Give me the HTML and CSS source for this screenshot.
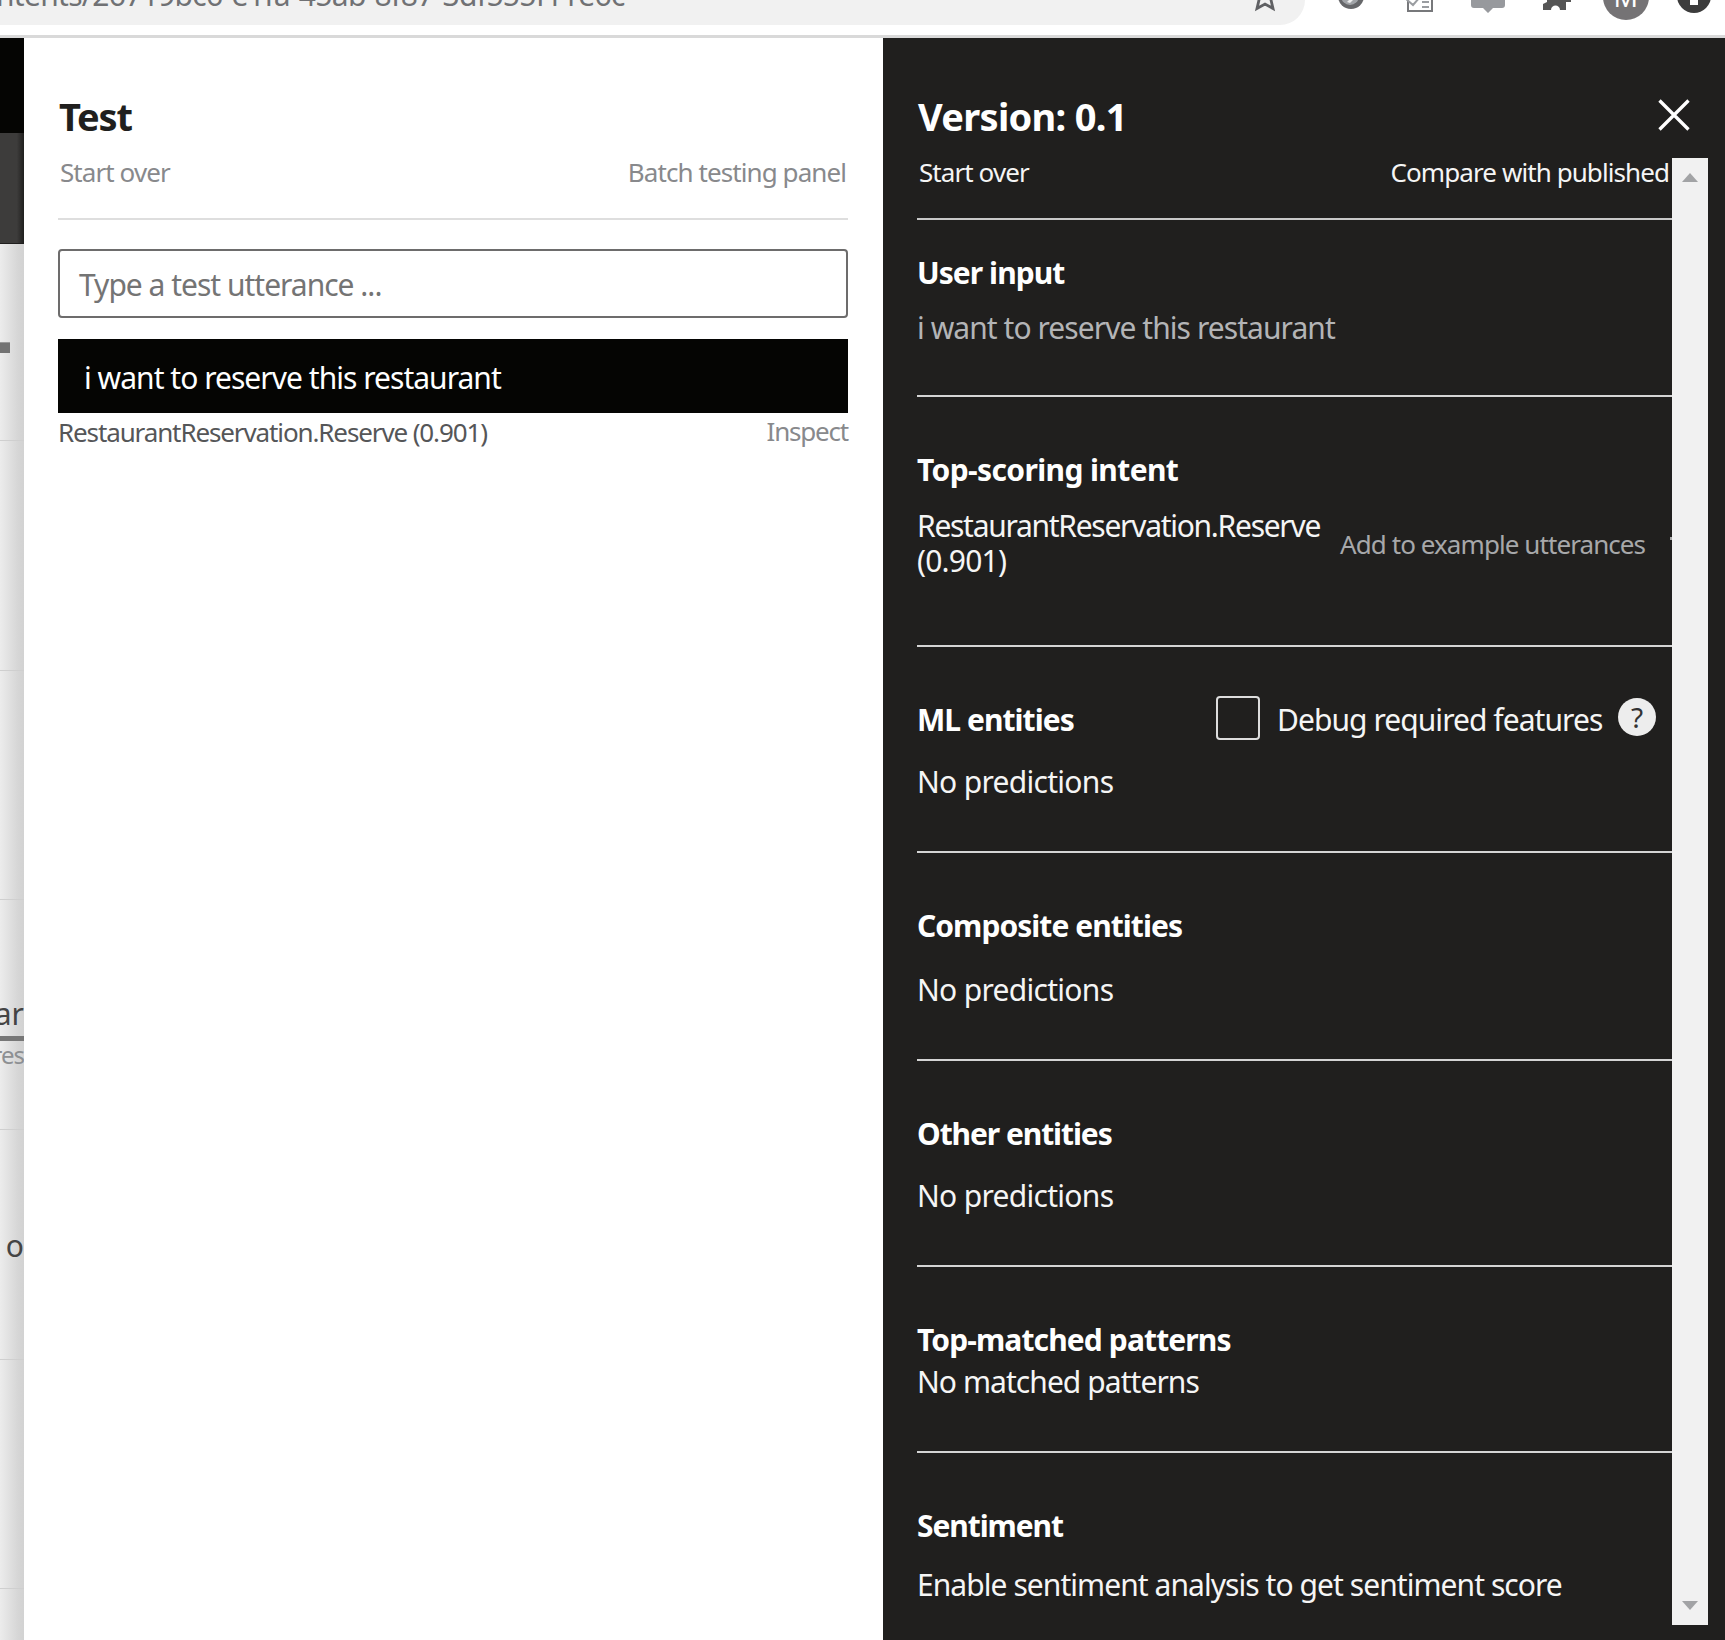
FILE: index.html
```
<!DOCTYPE html>
<html lang="en">
<head>
<meta charset="utf-8">
<title>Test</title>
<link rel="stylesheet" href="styles.css">
</head>
<body>
<header class="browser">
  <div class="address"><span class="url">ntents/26719bc6-e1fa-45ab-8f87-3df555f11e6c</span>
    <svg class="star" width="24" height="25" viewBox="0 0 24 25"><path d="M12 -12 L15 -4 L22 -3 L18 0 L20 8.500 L12 4 L4 8.500 L6 0 L2 -3" fill="none" stroke="#606164" stroke-width="2.8"/></svg>
  </div>
  <div class="tools">
    <svg width="28" height="25"><circle cx="14" cy="-4" r="13" fill="#66676a"/><circle cx="13" cy="-4" r="9" fill="#a0a3a7"/><path d="M10 2l4-4 3 1-4 4z" fill="#eee"/></svg>
    <svg width="28" height="25"><path d="M2 0v11h24V0" fill="#fff" stroke="#77787b" stroke-width="2"/><path d="M0 -1l7 6 7-8M16 2h7M16 7h7" fill="none" stroke="#9a9da1" stroke-width="2"/></svg>
    <svg width="34" height="25"><path d="M0 0h34v5q0 3-3 3h-9l-5 5-5-5H3q-3 0-3-3z" fill="#97999d"/></svg>
    <svg width="32" height="25"><path d="M2 10V4l4-2V0h24v2h-5v8h-6c0-6-9-6-9 0z" fill="#555"/></svg>
    <span class="avatar">M</span>
    <svg width="34" height="25"><circle cx="17" cy="-4" r="17" fill="#3c3c3c"/><path d="M13 0h8v5h-8z" fill="#fff"/></svg>
  </div>
</header>
<main class="app">
  <aside class="under">
    <div class="nav"></div>
    <div class="bar"></div>
    <div class="page">
      <div class="cell c1"><i class="chip"></i></div>
      <div class="cell c2"></div>
      <div class="cell c3"></div>
      <div class="cell c4"><span class="frag">ar</span><span class="frag-note">res</span></div>
      <div class="cell c5"><span class="frag">o</span></div>
      <div class="cell c6"></div>
    </div>
  </aside>
  <section class="test">
    <h1 class="title">Test</h1>
    <div class="links"><a class="so">Start over</a><a class="batch">Batch testing panel</a></div>
    <div class="field">Type a test utterance ...</div>
    <div class="utterance">i want to reserve this restaurant</div>
    <div class="result"><span class="intent">RestaurantReservation.Reserve (0.901)</span><a class="inspect">Inspect</a></div>
  </section>
  <section class="inspector">
    <div class="top"><h1 class="title version">Version: 0.1</h1>
      <svg class="close" width="34" height="34" viewBox="0 0 34 34"><path d="M2.500 2.500L31.500 31.500M31.500 2.500L2.500 31.500" stroke="#fff" stroke-width="3.3"/></svg>
    </div>
    <div class="scroll">
      <div class="content">
        <div class="links"><a class="so">Start over</a><a class="compare">Compare with published</a></div>
        <div class="sec s1"><h2 class="h-user">User input</h2><p class="muted">i want to reserve this restaurant</p></div>
        <div class="sec s2"><h2 class="h-top">Top-scoring intent</h2>
          <div class="score"><p class="name">RestaurantReservation.Reserve<br><span class="value">(0.901)</span></p><a class="add">Add to example utterances</a><i class="tick"></i></div></div>
        <div class="sec s3"><div class="ml"><h2 class="h-ml">ML entities</h2><span class="box"></span><span class="debug">Debug required features</span><span class="help">?</span></div><p class="np">No predictions</p></div>
        <div class="sec s4"><h2 class="h-comp">Composite entities</h2><p class="np">No predictions</p></div>
        <div class="sec s5"><h2 class="h-other">Other entities</h2><p class="np">No predictions</p></div>
        <div class="sec s6"><h2 class="h-pat">Top-matched patterns</h2><p class="nm">No matched patterns</p></div>
        <div class="sec s7"><h2 class="h-sent">Sentiment</h2><p class="enable">Enable sentiment analysis to get sentiment score</p></div>
      </div>
      <div class="scrollbar">
        <svg width="16" height="9"><path d="M0 9L8 0L16 9z" fill="#a2a3a5"/></svg>
        <svg width="16" height="9"><path d="M0 0L8 9L16 0z" fill="#a2a3a5"/></svg>
      </div>
    </div>
  </section>
</main>
</body>
</html>
```
FILE: styles.css
```
* { box-sizing: border-box; }
body { margin: 0; width: 1725px; height: 1640px; overflow: hidden; background: #fff; font: 30px/40px "Noto Sans", "Open Sans", sans-serif; color: #201f1e; }
h1, h2, p { margin: 0; white-space: nowrap; }
a, span { white-space: nowrap; }
svg { display: block; flex: none; }

.browser { display: flex; height: 38px; border-bottom: 3px solid #d9d9d9; overflow: hidden; }
.address { display: flex; justify-content: space-between; width: 1305px; height: 25px; background: #f1f1f1; border-radius: 0 0 28px 0; padding-right: 28px; }
.url { font-size: 30px; line-height: 40px; margin-top: -25px; color: #707174; letter-spacing: -0.7px; margin-left: -4px; }
.tools { display: grid; grid-template-columns: repeat(6, 68.6px); justify-items: center; padding-left: 12px; width: 420px; }
.avatar { width: 46px; height: 46px; margin-top: -26px; border-radius: 50%; background: #757375; color: #fff; font-size: 27px; line-height: 46px; text-align: center; }

.app { display: grid; grid-template-columns: 24px 859px 842px; height: 1602px; }
.under { overflow: hidden; }
.nav { height: 95px; background: #050503; }
.bar { height: 111px; background: linear-gradient(90deg, #3d3c3b 70%, #201f1e); border-bottom: 1px solid #201f1e; }
.page { height: 1396px; background: linear-gradient(90deg, #ececec, #d6d6d6 75%, #d2d2d2); }
.cell { border-bottom: 1px solid #cfcfcf; display: flex; flex-direction: column; align-items: flex-end; }
.c1 { height: 197px; padding-top: 98px; align-items: flex-start; }
.c2, .c3 { height: 229.500px; }
.c4 { height: 230px; padding-top: 94px; }
.c5 { height: 230px; padding-top: 96px; }
.c6 { height: 229px; }
.chip { width: 10px; height: 11px; background: #737373; border-top: 1px solid #999; }
.frag { font-size: 30px; line-height: 40px; color: #444; }
.c4 .frag { width: 24px; height: 47px; border-bottom: 5px solid #777; display: flex; justify-content: flex-end; }
.frag-note { font-size: 24px; line-height: 28px; color: #8d9093; letter-spacing: -1px; }

.test { padding: 53px 35px 0 34px; }
.title { font-size: 38px; line-height: 50px; font-weight: 700; }
.test .title { letter-spacing: -1.2px; padding-left: 1px; }
.links { display: flex; justify-content: space-between; font-size: 26px; height: 68px; }
.test .links { margin-top: 11px; padding: 0 2px; border-bottom: 2px solid #dedede; color: #88898c; }
.field { margin-top: 29px; height: 69px; border: 2px solid #6d6c6c; border-radius: 4px; padding: 14px 19px; color: #747474; white-space: nowrap; letter-spacing: -1px; }
.utterance { margin-top: 21px; height: 74px; background: #050503; color: #fff; padding: 19px 26px 0; white-space: nowrap; letter-spacing: -0.97px; }
.result { display: flex; justify-content: space-between; font-size: 26px; color: #555658; margin-top: -1px; }
.intent { letter-spacing: -1.12px; }
.inspect { color: #88898c; letter-spacing: -1.2px; margin-top: -1px; }

.inspector { background: #201f1e; color: #f5f5f5; padding: 53px 17px 0 34px; }
.inspector h1, .inspector h2 { color: #fff; }
.top { display: flex; justify-content: space-between; height: 61px; padding-right: 17px; }
.version { letter-spacing: -0.7px; padding-left: 1px; }
.close { margin-top: 7px; }
.scroll { display: flex; }
.content { width: 755px; }
.inspector .links { border-bottom: 2px solid #c8c8c8; padding: 0 3px 0 2px; }
.sec { border-bottom: 2px solid #d4d4d4; padding-top: 53px; }
h2 { font-size: 30px; line-height: 40px; font-weight: 700; letter-spacing: -0.95px; }
.h-top { letter-spacing: -0.62px; }
.h-pat { letter-spacing: -0.88px; }
.h-other, .h-sent { letter-spacing: -1.08px; }
.s1 { height: 177px; padding-top: 33px; }
.s1 p { margin-top: 15px; }
.s2 { height: 250px; }
.s3, .s5 { height: 206px; }
.s4 { height: 208px; }
.s6 { height: 186px; }
.s7 { border: 0; }
.muted { color: #b3b4b6; letter-spacing: -0.94px; }
.score { display: flex; margin-top: 18px; }
.name { line-height: 35px; width: 423px; letter-spacing: -1.28px; }
.value { letter-spacing: -0.8px; }
.add { font-size: 26px; margin-top: 16px; color: #a7a8aa; }
.tick { width: 2px; height: 3px; margin: 29px 0 0 auto; background: #aaa; }
.ml { display: flex; height: 40px; }
.box { flex: none; width: 44px; height: 44px; margin: -4px 17px 0 auto; border: 2px solid #ddd; border-radius: 4px; }
.debug { width: 325px; }
.help { width: 38px; height: 38px; margin: -2px 16px 0 16px; border-radius: 50%; background: #ededed; color: #333; font-size: 28px; line-height: 38px; text-align: center; }
.s3 .np, .s5 .np { margin-top: 22px; }
.s4 .np { margin-top: 24px; }
.s6 .nm { margin-top: 2px; }
.s7 .enable { margin-top: 19px; }
.nm, .enable, .debug { letter-spacing: -0.94px; }
.np { letter-spacing: -0.7px; }
.so, .batch, .compare, .add { letter-spacing: -0.92px; }
.scrollbar { width: 36px; height: 1467px; margin-top: 6px; background: #f1f1f1; display: flex; flex-direction: column; justify-content: space-between; align-items: center; padding: 15px 0; }
```
